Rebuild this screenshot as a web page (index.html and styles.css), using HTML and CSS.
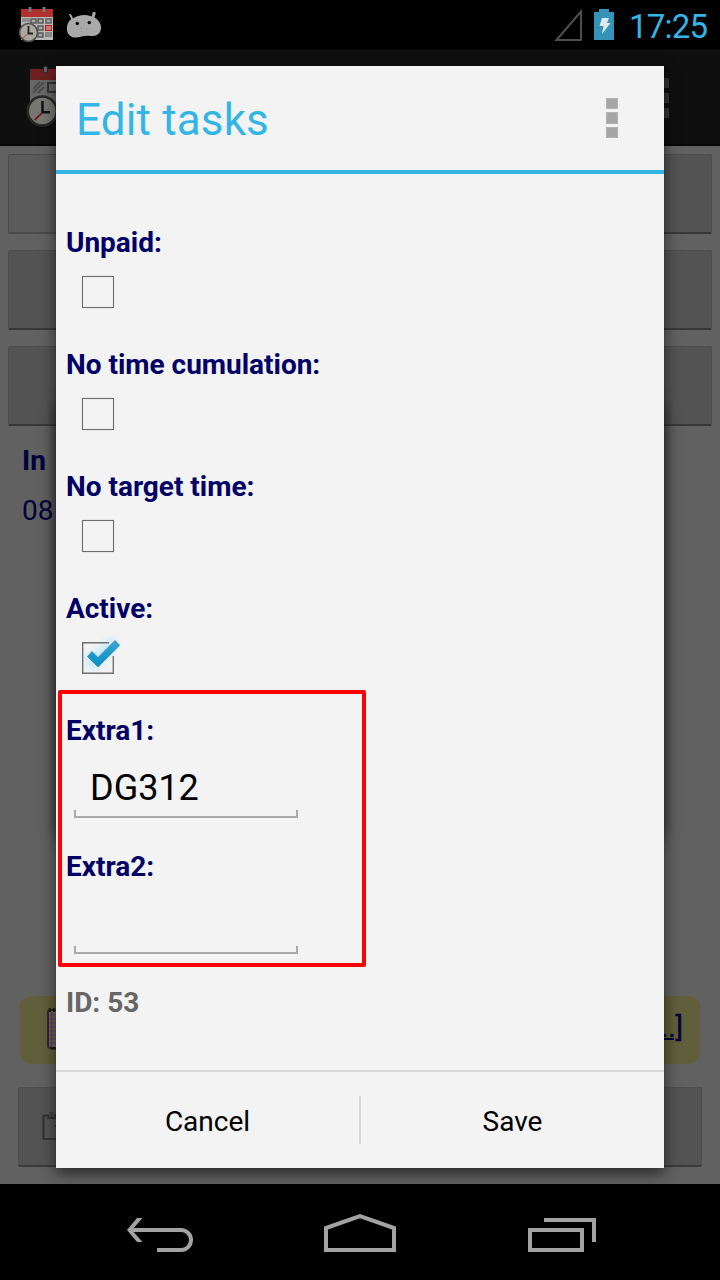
FILE: index.html
```html
<!DOCTYPE html>
<html lang="en">
<head>
<meta charset="utf-8">
<title>Edit tasks</title>
<link rel="stylesheet" href="styles.css">
</head>
<body>
<div class="phone">
  <header class="status">
    <svg class="status-left" width="110" height="50" viewBox="0 0 110 50">
      <rect x="21" y="9" width="32" height="31" fill="#b8b8b8"/>
      <rect x="21" y="9" width="32" height="8" fill="#b33030"/>
      <g stroke="#777" stroke-width="3"><path d="M30 7v5M44 7v5"/></g>
      <g fill="#aaa" stroke="#555" stroke-width="1.4"><rect x="31" y="19" width="5" height="4"/><rect x="38" y="19" width="5" height="4"/><rect x="46" y="19" width="5" height="4"/><rect x="38" y="26" width="5" height="4"/><rect x="38" y="33" width="5" height="4"/></g>
      <rect x="22" y="18" width="8" height="4" fill="#8c8c8c"/>
      <rect x="45.5" y="25.5" width="6" height="5" fill="#c77" stroke="#b52020"/>
      <rect x="45" y="32" width="7" height="5" fill="#888"/>
      <circle cx="28.500" cy="32.500" r="9" fill="#aaa99f" stroke="#4c4c4a" stroke-width="1.500"/>
      <path d="M28.500 26v7.500H33" fill="none" stroke="#222" stroke-width="1.800"/>
      <path d="M28 33.500l-5 4.500" stroke="#b44" stroke-width="1"/>
      <path d="M69 14.500c.5-1 2.300-.2 2.800 1l1.200 3c5-3.800 13-4.600 18.500-2l.8-2c-.5-2 2.200-4 3.300-1.700 .5 1.500-.8 2-1 5 5 2.500 7 7.500 6.300 11.500-.8 5.500-6 7.200-10.500 6.700-3-.4-6-.2-9 .6-5 1.800-11 1.200-13.500-3.200-2-4.500-1-11 3.300-14.300z" fill="#a9a9a9"/>
      <circle cx="77.300" cy="23.500" r="1.700"/><circle cx="89.300" cy="22.600" r="1.700"/>
      <g fill="#888"><rect x="81" y="28" width="1" height="1"/><rect x="86" y="28" width="1" height="1"/><rect x="81" y="31" width="1" height="1"/></g>
    </svg>
    <div class="status-right">
      <svg width="62" height="50" viewBox="0 0 62 50">
        <path d="M2.500 40L27 11.500V40z" fill="none" stroke="#4e4e4e" stroke-width="2"/>
        <path d="M40 12h5V9h10v3h5v28H40z" fill="#3593b9"/>
        <path d="M48 18h7l-2 5h3.500l-8.500 11 1.500-8h-4z" fill="#dcebf0"/>
      </svg>
      <span class="clock">17:25</span>
    </div>
  </header>

  <main class="app">
    <div class="action-bar">
      <svg class="app-icon" width="36" height="70" viewBox="0 0 36 70">
        <rect x="6" y="12" width="40" height="40" fill="#686868"/>
        <rect x="6" y="4" width="40" height="11" fill="#6d2020"/>
        <rect x="19.500" y="1" width="4" height="7" rx="2" fill="#666" stroke="#222"/>
        <path d="M9 24l7-7M9 28L20 17M14 28l6-6" stroke="#4c4c4c" stroke-width="2"/>
        <rect x="24" y="18" width="11" height="9" fill="#666" stroke="#333" stroke-width="2"/>
        <circle cx="18.300" cy="46" r="14.500" fill="#777772" stroke="#292927" stroke-width="2.500"/>
        <path d="M18.500 36v11.300H26" fill="none" stroke="#111" stroke-width="2.500"/>
        <path d="M18 48l-7.500 7" stroke="#702020" stroke-width="1.800"/>
      </svg>
      <div class="bar-dots"><i></i><i></i><i></i></div>
    </div>
    <div class="app-buttons">
      <div class="pair"><div class="btn first"></div><div class="btn"></div></div>
      <div class="btn"></div>
      <div class="btn"></div>
    </div>
    <div class="times">
      <div class="in">In</div>
      <div>08</div>
    </div>
    <div class="note">
      <svg width="20" height="46" viewBox="0 0 20 46">
        <rect x="2" y="4" width="22" height="38" rx="2" fill="#69696b" stroke="#2c2c2c" stroke-width="2"/>
        <path d="M3 9h17M3 13h17M3 17h17M3 21h17M3 25h17M3 29h17M3 33h17M3 37h17" stroke="#50507c"/>
        <path d="M5.500 6v35" stroke="#793345" stroke-width="1.300"/>
        <path d="M4 2v4M8 2v4M12 2v4M5 42.500h15" stroke="#181818" stroke-width="1.800"/>
      </svg>
      <span class="note-link">[...]</span>
    </div>
    <div class="btn wide">
      <svg width="28" height="40" viewBox="0 0 28 40">
        <path d="M14 9.500H9.500v23.500h19M21 20h6" fill="none" stroke="#343434" stroke-width="2.200"/>
        <path d="M14 9v3h7V9h5" fill="none" stroke="#343434" stroke-width="2"/>
        <path d="M17.500 6v5" stroke="#404040" stroke-width="4"/>
      </svg>
    </div>
    <div class="back-shadow"></div>
  </main>

  <section class="dialog">
    <div class="dialog-head">
      <h1>Edit tasks</h1>
      <div class="menu-dots"><i></i><i></i><i></i></div>
    </div>
    <div class="form">
      <div class="row"><label class="label">Unpaid:</label><span class="check"></span></div>
      <div class="row"><label class="label">No time cumulation:</label><span class="check"></span></div>
      <div class="row"><label class="label">No target time:</label><span class="check"></span></div>
      <div class="row"><label class="label">Active:</label>
        <svg class="checked" width="50" height="44" viewBox="0 0 50 44">
          <defs><linearGradient id="tick" x2="0" y2="1"><stop offset="0" stop-color="#37a8d6"/><stop offset="1" stop-color="#008fc5"/></linearGradient></defs>
          <path class="glow" d="M10 22l6 7L36 8" fill="none" stroke="#8edcff" stroke-width="9"/>
          <path d="M31 8.700H4.700v30.600h30.600V22" fill="none" stroke="#707070" stroke-width="1.400"/>
          <path d="M9.500 22.500l4.500-5 6 6L37 6.500l4.600 4.800L20 33z" fill="url(#tick)" stroke="#4588a3" stroke-width=".8"/>
        </svg>
      </div>
      <div class="field"><label class="label">Extra1:</label><div class="input">DG312</div></div>
      <div class="field"><label class="label">Extra2:</label><div class="input"></div></div>
      <div class="label id">ID: 53</div>
      <svg class="highlight" width="308" height="278" viewBox="0 0 308 278"><path d="M2 2H306V275H2z" fill="none" stroke="#f00" stroke-width="4" stroke-linejoin="round"/></svg>
    </div>
    <div class="actions">
      <div class="action">Cancel</div>
      <div class="split"></div>
      <div class="action">Save</div>
    </div>
  </section>

  <nav class="nav">
    <svg width="720" height="96" viewBox="0 0 720 96" fill="none" stroke="#a3a3a3" stroke-width="4">
      <path d="M157 66h24a10 10 0 0 0 0-20H131"/>
      <path d="M127 46l10-12h5.500l-10.500 12 10.500 12H137z" fill="#a3a3a3" stroke="none"/>
      <path d="M326 66V44L360 32l34 12V66z"/>
      <path d="M530 46h52v20h-52zM544 36h50v22"/>
    </svg>
  </nav>
</div>
</body>
</html>
```
FILE: styles.css
```css
* { box-sizing: border-box; }
body { margin: 0; background: #000; font-family: Roboto, "Liberation Sans", sans-serif; }
.phone { position: relative; width: 720px; height: 1280px; overflow: hidden; display: flex; flex-direction: column; }
.status { height: 50px; display: flex; justify-content: space-between; background: #000; }
.status-right { display: flex; padding-right: 12px; }
.status-right svg { margin-right: 13px; }
.clock { color: #33b5e5; font-size: 33px; line-height: 53px; width: 79px; white-space: nowrap; letter-spacing: -.8px; }

.app { position: relative; height: 1134px; background: #616161; color: #00003a; font-size: 28px; }
.action-bar { height: 96px; display: flex; justify-content: space-between; padding: 14px 51px 0 24px; background: #0f0f0f; border-bottom: 2px solid #080808; border-top: 1px solid #161616; }
.bar-dots { display: flex; flex-direction: column; gap: 5px; padding-top: 13px; }
.bar-dots i { width: 10px; height: 10px; background: #343434; }
.app-buttons { display: flex; flex-direction: column; gap: 16px; padding: 8px; }
.pair { display: grid; grid-template-columns: 1fr 1fr; gap: 16px; }
.btn { height: 80px; background: #535353; border-radius: 2px; border: 1px solid #4e4e4e; border-bottom: 2px solid #393939; }
.btn.first { background: #5b5b5b; border-color: #4b4b4b; }
.times { padding: 10px 22px; line-height: 34px; display: flex; flex-direction: column; gap: 16px; height: 562px; }
.in { font-weight: 700; }
.note { height: 68px; margin: 0 20px 23px; padding: 10px 17px 0 26px; border-radius: 12px; background: #5f5f3b; display: flex; justify-content: space-between; }
.note-link { line-height: 44px; text-decoration: underline; text-decoration-thickness: 2px; -webkit-text-stroke: .4px #00003a; }
.btn.wide { margin: 0 18px; padding: 18px 0 0 15px; }
.back-shadow { position: absolute; left: 56px; right: 56px; top: 350px; height: 434px; box-shadow: 0 4px 12px rgba(0,0,0,.5); }

.dialog { position: absolute; left: 56px; top: 66px; width: 608px; height: 1102px; display: flex; flex-direction: column; background: #f3f3f3; box-shadow: 0 5px 14px rgba(0,0,0,.62); }
.dialog-head { height: 108px; display: flex; justify-content: space-between; padding: 0 46px 0 20px; border-bottom: 4px solid #33b5e5; }
.dialog-head h1 { margin: 0; font-size: 44px; font-weight: 400; line-height: 109px; color: #33b5e5; letter-spacing: .15px; }
.menu-dots { display: flex; flex-direction: column; gap: 3.5px; padding-top: 31.5px; }
.menu-dots i { width: 12px; height: 11.300px; background: #a6a6a6; border: 1px solid #b2b2b2; }
.form { position: relative; height: 896px; padding: 52px 10px 0; }
.row { height: 122px; display: flex; flex-direction: column; }
.label { display: block; height: 34px; line-height: 34px; font-size: 28px; font-weight: 700; color: #000066; letter-spacing: -.02px; white-space: nowrap; }
.check { width: 32px; height: 32px; margin: 16px 0 0 16px; border: 1px solid #707070; box-shadow: 0 0 1px #aaa, inset 0 0 1px #aaa; }
.checked { margin: 8px 0 0 12px; }
.glow { filter: blur(4px); opacity: .65; }
.field { height: 136px; }
.input { position: relative; height: 70px; width: 224px; margin-left: 8px; padding-left: 16px; font-size: 36px; line-height: 81px; color: #000; border-bottom: 2px solid #aaa; }
.input::before, .input::after { content: ""; position: absolute; bottom: 0; width: 2px; height: 6px; background: #aaa; }
.input::before { left: 0; }
.input::after { right: 0; }
.id { color: #666; }
.highlight { position: absolute; left: 2px; top: 516px; }
.actions { height: 98px; display: flex; align-items: center; border-top: 2px solid #d9d9d9; font-size: 28px; color: #000; }
.action { flex: 1; text-align: center; padding-top: 2px; }
.split { width: 2px; height: 48px; background: #d9d9d9; }
.nav { height: 96px; background: #000; }
```
